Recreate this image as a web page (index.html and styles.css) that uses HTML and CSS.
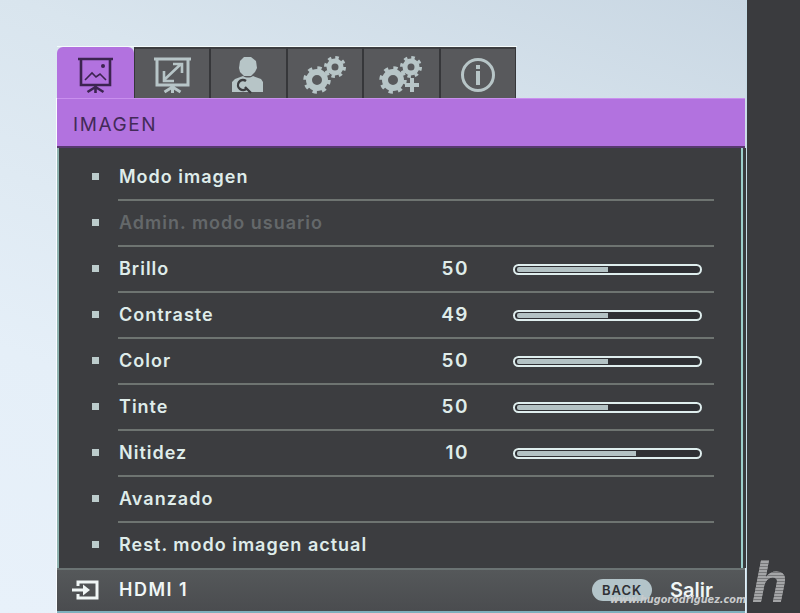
FILE: index.html
```html
<!DOCTYPE html>
<html lang="es">
<head>
  <meta charset="UTF-8" />
  <title>IMAGEN</title>
  <link rel="stylesheet" href="styles.css">
</head>
<body>
  <div class="wall">
    <div class="osd">
      <div class="tabs">
        <div class="tab active">
          <svg viewBox="0 0 38 38" class="tab-icon">
            <path d="M2 3h35M5 3v26h29V3M19.500 29v3M19.500 31l-8 5M19.500 31l8 5M19.500 31v6" fill="none" stroke="currentColor" stroke-width="2.600"/>
            <path d="M9 24l7-7 4 4 4-3 6 6" fill="none" stroke="currentColor" stroke-width="1.600"/>
            <circle cx="27" cy="10" r="2" fill="currentColor"/>
          </svg>
        </div>
        <div class="tab">
          <svg viewBox="0 0 38 38" class="tab-icon">
            <path d="M1 3h37M4 3v26h31V3M19.500 29v3M19.500 31l-8 5M19.500 31l8 5M19.500 31v6" fill="none" stroke="currentColor" stroke-width="3"/>
            <path d="M11 24l17-16M20 8h9v9M11 15v10h10" fill="none" stroke="currentColor" stroke-width="2.600"/>
          </svg>
        </div>
        <div class="tab">
          <svg viewBox="0 0 38 38" class="tab-icon">
            <path d="M15 1h7l5 4 1 7-2 4-4 4h-7l-4-4-1-4 1-7z" fill="currentColor"/>
            <path d="M3 36v-10l3-3 8-3c3 2 7 2 10 0l8 3 2 3v10z" fill="currentColor"/>
            <path d="M17 25a5 5 0 1 0 1 7M16 31l6 6" fill="none" stroke="#3c3d40" stroke-width="2.400"/>
          </svg>
        </div>
        <div class="tab">
          <svg viewBox="0 0 44 38" class="tab-icon wide">
            <use href="#gear-big"/>
            <use href="#gear-small"/>
          </svg>
        </div>
        <div class="tab">
          <svg viewBox="0 0 44 38" class="tab-icon wide">
            <use href="#gear-big"/>
            <use href="#gear-small"/>
            <path d="M33 22v14M26 29h14" stroke="currentColor" stroke-width="4"/>
          </svg>
        </div>
        <div class="tab">
          <svg viewBox="0 0 38 38" class="tab-icon">
            <circle cx="19" cy="19" r="15.500" fill="none" stroke="currentColor" stroke-width="3"/>
            <rect x="17" y="9" width="4" height="4" fill="currentColor"/>
            <rect x="17" y="15" width="4" height="14" fill="currentColor"/>
          </svg>
        </div>
      </div>

      <div class="title-bar">IMAGEN</div>

      <ul class="menu">
        <li class="item"><span class="bullet"></span><div class="item-body"><span class="label">Modo imagen</span></div></li>
        <li class="item"><span class="bullet"></span><div class="item-body"><span class="label disabled">Admin. modo usuario</span></div></li>
        <li class="item"><span class="bullet"></span><div class="item-body"><span class="label">Brillo</span><span class="value">50</span><span class="slider"><span class="fill" style="width:50%"></span></span></div></li>
        <li class="item"><span class="bullet"></span><div class="item-body"><span class="label">Contraste</span><span class="value">49</span><span class="slider"><span class="fill" style="width:50%"></span></span></div></li>
        <li class="item"><span class="bullet"></span><div class="item-body"><span class="label">Color</span><span class="value">50</span><span class="slider"><span class="fill" style="width:50%"></span></span></div></li>
        <li class="item"><span class="bullet"></span><div class="item-body"><span class="label">Tinte</span><span class="value">50</span><span class="slider"><span class="fill" style="width:50%"></span></span></div></li>
        <li class="item"><span class="bullet"></span><div class="item-body"><span class="label">Nitidez</span><span class="value">10</span><span class="slider"><span class="fill" style="width:66%"></span></span></div></li>
        <li class="item"><span class="bullet"></span><div class="item-body"><span class="label">Avanzado</span></div></li>
        <li class="item last"><span class="bullet"></span><div class="item-body"><span class="label">Rest. modo imagen actual</span></div></li>
      </ul>

      <div class="footer">
        <svg viewBox="0 0 28 20" class="source-icon">
          <path d="M7 6V2h19v16H7v-4" fill="none" stroke="currentColor" stroke-width="3"/>
          <path d="M1 10h14" stroke="currentColor" stroke-width="3"/>
          <path d="M12 4.500l7 5.500-7 5.500z" fill="currentColor"/>
        </svg>
        <span class="source-name">HDMI 1</span>
        <span class="back-pill">BACK</span>
        <span class="exit">Salir</span>
      </div>
    </div>
  </div>
  <div class="strip"></div>

  <span class="site-mark">www.hugorodriguez.com</span>
  <span class="logo-mark">h</span>

  <svg width="0" height="0" class="defs">
    <defs>
      <g id="gear-big">
        <circle cx="14" cy="24" r="8" fill="none" stroke="currentColor" stroke-width="6"/>
        <circle cx="14" cy="24" r="12" fill="none" stroke="currentColor" stroke-width="3.500" stroke-dasharray="4.300 5.120"/>
      </g>
      <g id="gear-small">
        <circle cx="32" cy="11" r="6" fill="none" stroke="currentColor" stroke-width="5"/>
        <circle cx="32" cy="11" r="9.500" fill="none" stroke="currentColor" stroke-width="3" stroke-dasharray="3.500 3.960"/>
      </g>
    </defs>
  </svg>
</body>
</html>
```

FILE: styles.css
```css
* {
  box-sizing: border-box;
}
html, body {
  height: 613px;
  overflow: hidden;
}
body {
  margin: 0;
  display: flex;
  position: relative;
  font-family: "Inter", "DejaVu Sans", sans-serif;
  background: #3a3b3e;
}
.wall {
  width: 747px;
  height: 613px;
  padding: 47px 1px 0 57px;
  background: linear-gradient(200deg, #c9d7e3 0%, #d9e5ee 30%, #e5eff8 70%, #e8f1fa 100%);
  border-right: 1px solid #c5dbe6;
}
.strip {
  flex: 1;
  background: #3a3b3e;
}
.defs {
  position: absolute;
}

/* tabs */
.tabs {
  display: flex;
  width: 460px;
  height: 51px;
  box-shadow: 0 -1px 0 #f4fbfb;
}
.tab {
  width: 76.500px;
  display: flex;
  justify-content: center;
  padding-top: 7px;
  background: #58595c;
  color: #b7c5c7;
  border: 1px solid #36373a;
  border-bottom: 0;
  border-top: 2px solid #3c3d40;
}
.tab.active {
  background: #b272df;
  color: #3c2450;
  border: 0;
  border-radius: 6px 6px 0 0;
  padding-top: 9px;
}
.tab-icon {
  width: 38px;
  height: 38px;
}
.tab-icon.wide {
  width: 44px;
}

/* purple title */
.title-bar {
  height: 50px;
  padding: 15px 0 0 16px;
  background: #b272df;
  border-top: 1px solid #c98fee;
  border-bottom: 2px solid #57386f;
  box-shadow: -1px 0 0 #f8fcff;
  color: #432a58;
  font-size: 19px;
  font-weight: 400;
  letter-spacing: 1.6px;
  line-height: 22px;
}

/* rows */
.menu {
  list-style: none;
  margin: 0 2px 0 0;
  height: 420px;
  padding: 7px 0 0;
  background: #3c3d40;
  border-left: 2px solid #8fb3b0;
  border-right: 2px solid #9ccfcc;
  box-shadow: -1px 0 0 #f8fcff, 3px 0 0 #3a3b3e;
}
.item {
  height: 46px;
  display: flex;
  align-items: center;
  padding-left: 33px;
}
.bullet {
  width: 7px;
  height: 7px;
  margin: 0 19px 4px 0;
  background: #bccccc;
}
.item-body {
  flex: 1;
  height: 46px;
  margin-right: 27px;
  padding: 0 0 2px 1px;
  display: flex;
  align-items: center;
  border-bottom: 2px solid #6e7471;
}
.last .item-body {
  border-bottom-color: transparent;
}
.label {
  flex: 1;
  color: #dfecea;
  font-size: 18px;
  font-weight: 600;
  letter-spacing: 1px;
}
.label.disabled {
  color: #64686a;
}
.value {
  width: 60px;
  text-align: right;
  color: #dfecea;
  font-size: 19px;
  font-weight: 600;
  letter-spacing: 1.500px;
}
.slider {
  width: 189px;
  height: 11px;
  margin: 2px 12px 0 44px;
  padding: 1px 2px;
  display: block;
  border: 2px solid #dfeeee;
  border-radius: 6px;
  background: #2f3034;
}
.fill {
  display: block;
  height: 100%;
  background: #b3c2c4;
  border-radius: 2px 0 0 2px;
}

/* bottom bar */
.footer {
  height: 45px;
  display: flex;
  align-items: center;
  padding: 0 32px 2px 14px;
  background: linear-gradient(180deg, #55585a, #4a4c4f);
  border-top: 2px solid #6b7373;
  border-bottom: 2px solid #7fb0bd;
  box-shadow: -1px 0 0 #f8fcff;
  color: #f0f6f6;
}
.source-icon {
  width: 28px;
  height: 20px;
  margin-right: 20px;
}
.source-name {
  flex: 1;
  font-size: 18px;
  font-weight: 600;
  letter-spacing: 1.500px;
}
.back-pill {
  width: 60px;
  height: 22px;
  margin-right: 18px;
  border-radius: 11px;
  background: #b3c4c9;
  color: #2f3034;
  font-size: 13px;
  font-weight: 600;
  line-height: 22px;
  text-align: center;
  letter-spacing: 1px;
}
.exit {
  font-size: 20px;
  font-weight: 600;
}

/* watermark */
.site-mark {
  position: absolute;
  left: 610px;
  top: 594px;
  color: #c9cbcc;
  font-family: "DejaVu Sans", sans-serif;
  font-size: 9.700px;
  font-style: italic;
  font-weight: 700;
  line-height: 12px;
}
.logo-mark {
  position: absolute;
  left: 752px;
  top: 553px;
  font-family: "Liberation Sans", sans-serif;
  font-size: 58px;
  font-style: italic;
  font-weight: 700;
  line-height: 58px;
  color: transparent;
  background: repeating-linear-gradient(0deg, #a4a5a7 0 2px, #77787a 2px 3px), #98999b;
  -webkit-background-clip: text;
  background-clip: text;
}
```
